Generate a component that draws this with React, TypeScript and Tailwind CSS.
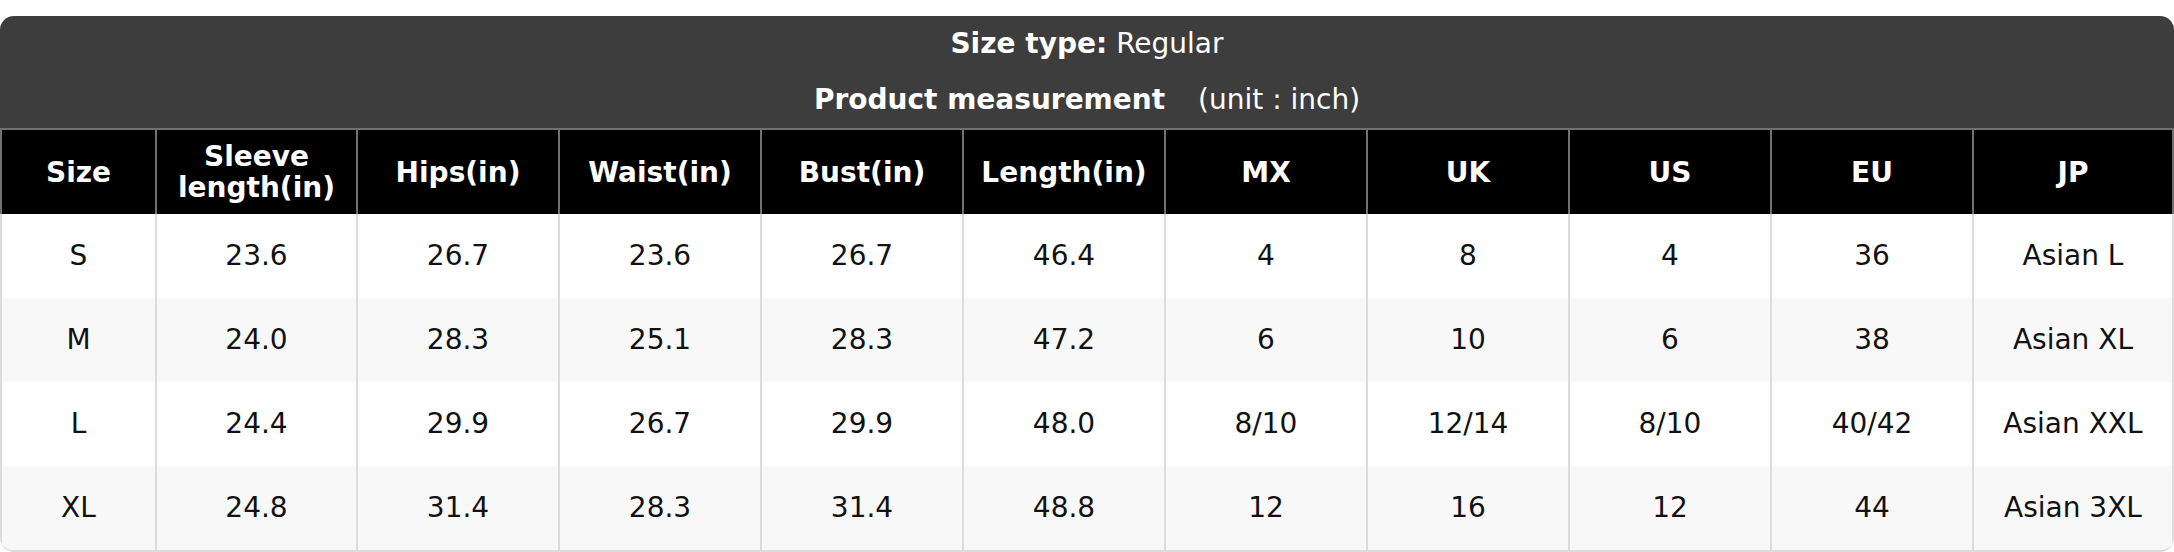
import React from "react";

const headers = ["Size", "Sleeve length(in)", "Hips(in)", "Waist(in)", "Bust(in)", "Length(in)", "MX", "UK", "US", "EU", "JP"];

const rows = [
  ["S", "23.6", "26.7", "23.6", "26.7", "46.4", "4", "8", "4", "36", "Asian L"],
  ["M", "24.0", "28.3", "25.1", "28.3", "47.2", "6", "10", "6", "38", "Asian XL"],
  ["L", "24.4", "29.9", "26.7", "29.9", "48.0", "8/10", "12/14", "8/10", "40/42", "Asian XXL"],
  ["XL", "24.8", "31.4", "28.3", "31.4", "48.8", "12", "16", "12", "44", "Asian 3XL"],
];

const cols = "grid grid-cols-[155px_201px_repeat(9,minmax(0,1fr))]";

export default function App() {
  return (
    <div className="w-[2174px] h-[552px] bg-white pt-[16px] font-[family-name:DejaVu_Sans,sans-serif]">
      <div className="rounded-[14px] overflow-hidden border-b-2 border-[#dcdcdc]">
        {/* Title band */}
        <div className="bg-[#3d3d3d] text-white text-[28px] leading-none">
          <div className="h-[56px] flex items-center justify-center">
            <span className="font-bold">Size type:</span>
            <span className="ml-[9px]">Regular</span>
          </div>
          <div className="h-[56px] flex items-center justify-center">
            <span className="font-bold">Product measurement</span>
            <span className="ml-[33px]">(unit : inch)</span>
          </div>
        </div>

        {/* Header row */}
        <div className={`${cols} bg-black border-t-2 border-[#707070] h-[86px]`}>
          {headers.map((h, i) => (
            <div
              key={h}
              className={`border-l-2 border-[#707070] flex items-center justify-center text-center text-white font-bold text-[28px] leading-[31px] px-2 ${i === headers.length - 1 ? "border-r-2" : ""}`}
            >
              {h === "Sleeve length(in)" ? (
                <span>
                  Sleeve
                  <br />
                  length(in)
                </span>
              ) : (
                h
              )}
            </div>
          ))}
        </div>

        {/* Body */}
        {rows.map((r, ri) => (
          <div key={r[0]} className={`${cols} h-[84px] ${ri % 2 === 1 ? "bg-[#f8f8f8]" : "bg-white"}`}>
            {r.map((c, ci) => (
              <div
                key={ci}
                className={`border-l-2 border-[#dcdcdc] flex items-center justify-center text-[28px] text-[#111111] ${ci === r.length - 1 ? "border-r-2" : ""}`}
              >
                {c}
              </div>
            ))}
          </div>
        ))}
      </div>
    </div>
  );
}
